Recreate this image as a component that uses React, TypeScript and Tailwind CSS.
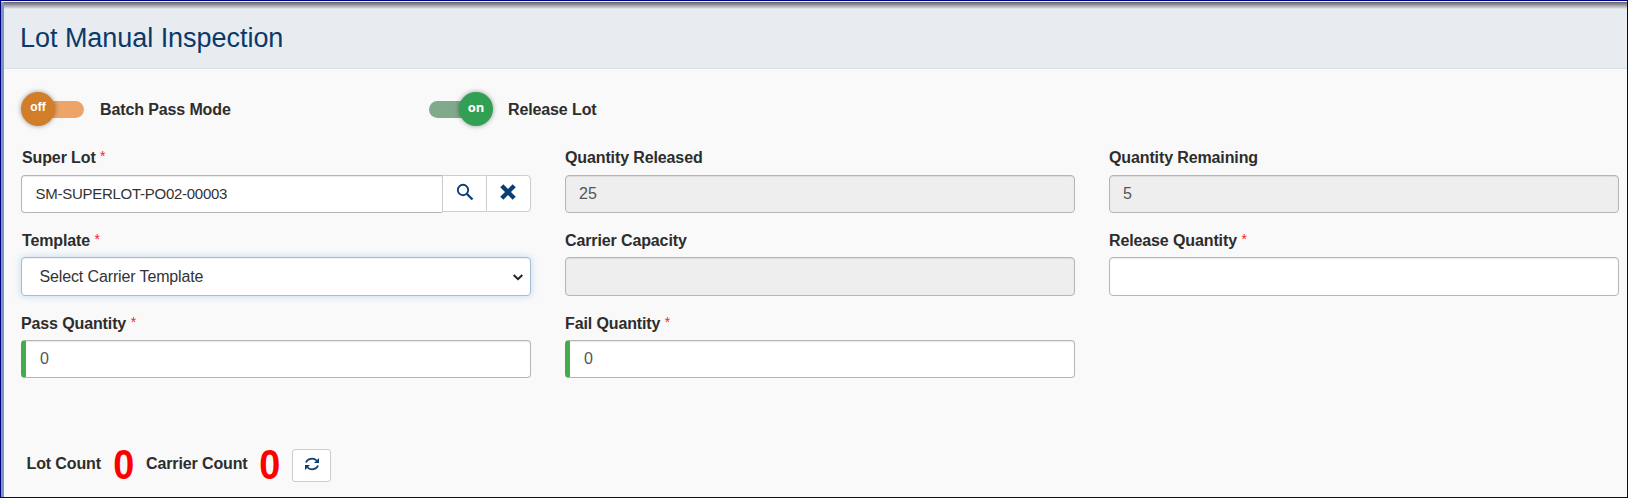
import type { ReactNode } from "react";

function Label({
  children,
  required,
  inset,
  lower,
}: {
  children: ReactNode;
  required?: boolean;
  inset?: boolean;
  lower?: boolean;
}) {
  return (
    <div
      className={`flex h-6 items-start whitespace-pre text-[16px] leading-6 font-bold tracking-[-0.12px] text-[#2d2d2d] ${
        inset ? "pl-px" : ""
      } ${lower ? "pt-px" : ""}`}
    >
      <span>{children}</span>
      {required && <span className="ml-[4.5px] text-[14px] leading-[21px] font-normal text-[#ff1a1a]">*</span>}
    </div>
  );
}

const box = "flex items-center rounded border border-[#b5b5b5] shadow-[inset_0_1px_1px_rgba(0,0,0,0.08)]";

function Field({
  label,
  value,
  required,
  disabled,
  valid,
  lower,
  height,
}: {
  label: string;
  value?: string;
  required?: boolean;
  disabled?: boolean;
  valid?: boolean;
  lower?: boolean;
  height: string;
}) {
  return (
    <div>
      <Label required={required} lower={lower}>{label}</Label>
      <div
        className={`${box} ${height} mt-[5px] text-[16px] text-[#555] ${disabled ? "bg-[#eee]" : "bg-white"} ${
          valid ? "border-l-[5px] border-l-[#44ab4b] pl-[14px]" : "pl-[13px]"
        }`}
      >
        {value}
      </div>
    </div>
  );
}

function Toggle({ on }: { on?: boolean }) {
  return (
    <div className={`relative flex h-[34px] w-16 items-center ${on ? "justify-end" : ""}`}>
      <div
        className={`absolute top-[9px] h-[17px] w-[60px] rounded-full ${on ? "left-0 bg-[#81a98c]" : "left-[3px] bg-[#eda467]"}`}
      />
      <div
        className={`relative flex size-[34px] justify-center rounded-full pt-[6px] leading-[18px] font-bold tracking-normal text-white shadow-[0_0_5px_rgba(0,0,0,0.4)] ${
          on ? "bg-[#31a052] font-['Open_Sans',sans-serif] text-[13px]" : "bg-[#d27d28] text-[12px] tracking-[-0.2px]"
        }`}
      >
        {on ? "on" : "off"}
      </div>
    </div>
  );
}

function Count({ value }: { value: number }) {
  return (
    <span className="w-[34px] text-[42px] leading-[40px] text-[#ff0000]">
      <span className="inline-block scale-x-90">{value}</span>
    </span>
  );
}

export default function App() {
  return (
    <div className="flex h-[498px] w-[1628px] flex-col border border-[#000080] bg-[#f0f0f5] pt-px font-['Liberation_Sans',Arial,sans-serif]">
      <div className="flex min-h-0 flex-1 flex-col border-l-[3px] border-[#7799bd] bg-[#f9f9f9]">
        <header className="flex h-[67px] flex-col border-b border-[#dcdfe6] bg-[#e8ebf0]">
          <div className="h-[7px] bg-linear-to-b from-[#625f6a] to-[#e8ebf0]" />
          <h1 className="mt-[12px] pl-4 text-[27px] leading-[34px] tracking-[-0.04px] text-[#0a3a68]">Lot Manual Inspection</h1>
        </header>

        <main className="pl-[17px]">
          <div className="mt-[23px] flex h-[34px] items-center text-[16px] font-bold tracking-[-0.12px] text-[#2d2d2d]">
            <div className="flex w-[408px] items-center">
              <Toggle />
              <span className="ml-[15px] pt-[2px]">Batch Pass Mode</span>
            </div>
            <Toggle on />
            <span className="ml-[15px] pt-[2px]">Release Lot</span>
          </div>

          <div className="mt-5 grid grid-cols-[510px_510px_510px] gap-x-[34px]">
            <div>
              <Label required inset>Super Lot</Label>
              <div className="mt-[5px] flex h-[38px] items-start">
                <div className={`${box} h-[38px] w-[421px] rounded-r-none border-r-0 bg-white pl-[13.5px] text-[15px] tracking-[-0.27px] text-[#333]`}>
                  SM-SUPERLOT-PO02-00003
                </div>
                <button className="flex h-[37px] w-[44px] items-center justify-center border border-r-0 border-[#ccc] bg-white pb-[3px]">
                  <svg width="18" height="18" viewBox="0 0 18 18" fill="none" stroke="#0a3f75">
                    <circle cx="7" cy="7" r="5.2" strokeWidth="1.9" />
                    <path d="M10.8 10.8l5.7 5.7" strokeWidth="2.3" />
                  </svg>
                </button>
                <button className="flex h-[37px] w-[45px] items-center justify-center rounded-r border border-[#ccc] bg-white pr-px pb-[3px]">
                  <svg width="16" height="16" viewBox="0 0 16 16" fill="none" stroke="#0a3f75">
                    <path d="M1.8 1.8l12.4 12.4M14.2 1.8L1.8 14.2" strokeWidth="4.4" />
                  </svg>
                </button>
              </div>
            </div>
            <Field label="Quantity Released" value="25" disabled height="h-[38px]" />
            <Field label="Quantity Remaining" value="5" disabled height="h-[38px]" />
          </div>

          <div className="mt-[15px] grid grid-cols-[510px_510px_510px] gap-x-[34px]">
            <div>
              <Label required inset lower>Template</Label>
              <div className="mt-[5px] flex h-[39px] items-center justify-between rounded border border-[#a3bdd5] bg-white pt-px pr-[7px] pl-[17.5px] text-[16px] tracking-[-0.13px] text-[#333] shadow-[inset_0_1px_1px_rgba(0,0,0,0.06),0_0_7px_rgba(120,175,230,0.45)]">
                Select Carrier Template
                <svg width="10" height="7" viewBox="0 0 10 7" fill="none" stroke="#222" strokeWidth="2">
                  <path d="M.7 1l4.3 4.2L9.3 1" />
                </svg>
              </div>
            </div>
            <Field label="Carrier Capacity" lower disabled height="h-[39px]" />
            <Field label="Release Quantity" lower required height="h-[39px]" />
          </div>

          <div className="mt-[15px] grid grid-cols-[510px_510px_510px] gap-x-[34px]">
            <Field label="Pass Quantity" value="0" lower required valid height="h-[38px]" />
            <Field label="Fail Quantity" value="0" lower required valid height="h-[38px]" />
          </div>

          <div className="mt-[67px] flex h-[42px] items-start pl-[5.5px] text-[16px] leading-6 font-bold tracking-[-0.12px] text-[#2d2d2d]">
            <span className="mt-[7px] w-[85.5px]">Lot Count</span>
            <Count value={0} />
            <span className="mt-[7px] w-[112px]">Carrier Count</span>
            <Count value={0} />
            <button className="mt-[4px] flex h-[33px] w-[39px] items-center justify-center rounded-[3px] border border-[#ccc] bg-white pb-[4px]">
              <svg width="16" height="16" viewBox="0 0 16 16" fill="none" stroke="#0a3f75" strokeWidth="1.7">
                <path d="M2 6.6C3.2 2.600 9.500 1.200 12.800 4.800M14 9.400C12.800 13.400 6.500 14.800 3.200 11.200" />
                <path d="M15 2v5h-5zM1 14v-5h5z" fill="#0a3f75" stroke="none" />
              </svg>
            </button>
          </div>
        </main>
      </div>
    </div>
  );
}
